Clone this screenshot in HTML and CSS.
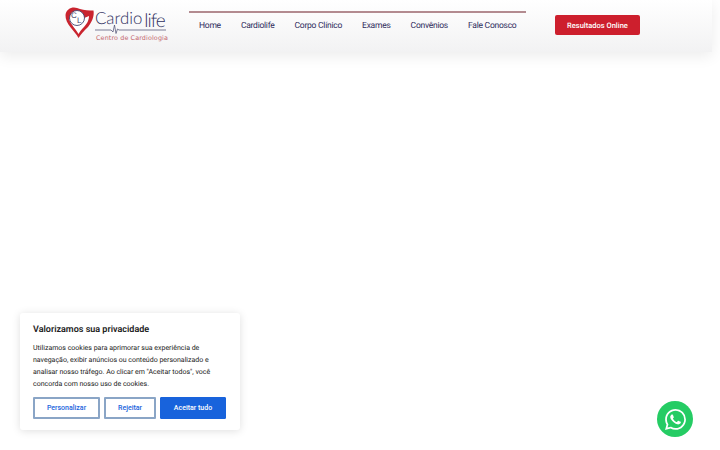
FILE: index.html
```html
<!DOCTYPE html>
<html lang="pt-BR">
<head>
  <meta charset="UTF-8">
  <meta name="viewport" content="width=device-width, initial-scale=1.0">
  <title>Cardiolife - Centro de Cardiologia</title>
  <link rel="stylesheet" href="styles.css">
</head>
<body>
  <header class="topo">
    <a class="logo" href="#">
      <svg class="logo-coracao" width="30" height="32" viewBox="0 0 30 32">
        <path d="M13.5 31 C10 24 0 17 0.5 8 C1 3 5 0.5 9 0.5 C11 0.5 13 1 15 2 C19 3.5 24 3.5 28.5 3.5 C29.5 9 27 15 23 20 C19 24 16 27 13.5 31 Z" fill="#c9242f"/>
        <path d="M13.5 27 C11 22 6 18 4 12 L12 14 L24 9 C24 14 21 18 18.5 20.5 C16.5 22.5 15 24.5 13.5 27 Z" fill="#fff"/>
        <circle cx="12" cy="11" r="7.5" fill="#fff" stroke="#46476f" stroke-width="0.9"/>
        <text class="logo-cl" x="6" y="11">C</text>
        <text class="logo-cl" x="12" y="16">L</text>
      </svg>
      <div class="logo-textos">
        <div class="logo-nome">Cardio<span class="logo-life">life</span></div>
        <svg class="logo-pulso" width="72" height="10" viewBox="0 0 72 10">
          <path d="M0 6 H16 L18 8 L19.5 1 L21 9.5 L22.5 5 L24 6 H71" fill="none" stroke="#46476f" stroke-width="0.7"/>
        </svg>
        <div class="logo-sub">Centro de Cardiologia</div>
      </div>
    </a>

    <nav class="menu">
      <a href="#">Home</a>
      <a href="#">Cardiolife</a>
      <a href="#">Corpo Clínico</a>
      <a href="#">Exames</a>
      <a href="#">Convênios</a>
      <a href="#">Fale Conosco</a>
    </nav>

    <a class="btn-resultados" href="#">Resultados Online</a>
  </header>

  <div class="cookies">
    <h2>Valorizamos sua privacidade</h2>
    <p>Utilizamos cookies para aprimorar sua experiência de navegação, exibir anúncios ou conteúdo personalizado e analisar nosso tráfego. Ao clicar em "Aceitar todos", você concorda com nosso uso de cookies.</p>
    <div class="cookies-botoes">
      <button class="btn-borda btn-personalizar">Personalizar</button>
      <button class="btn-borda btn-rejeitar">Rejeitar</button>
      <button class="btn-aceitar">Aceitar tudo</button>
    </div>
  </div>

  <a class="whatsapp" href="#" title="WhatsApp">
    <svg width="21" height="21" viewBox="0 0 24 24">
      <path fill="#fff" d="M17.47 14.38c-.3-.15-1.76-.87-2.03-.97-.27-.1-.47-.15-.67.15-.2.3-.77.97-.94 1.17-.17.2-.35.22-.65.07-.3-.15-1.25-.46-2.39-1.47-.88-.79-1.48-1.76-1.65-2.06-.17-.3-.02-.46.13-.61.13-.13.3-.35.45-.52.15-.17.2-.3.3-.5.1-.2.05-.37-.02-.52-.08-.15-.67-1.61-.92-2.21-.24-.58-.49-.5-.67-.51h-.57c-.2 0-.52.07-.79.37-.27.3-1.04 1.02-1.04 2.48s1.07 2.88 1.21 3.07c.15.2 2.1 3.2 5.08 4.49.71.3 1.26.49 1.69.62.71.23 1.36.2 1.87.12.57-.09 1.76-.72 2.01-1.41.25-.7.25-1.29.17-1.41-.07-.13-.27-.2-.57-.35zM12.05 21.8h0a9.87 9.87 0 0 1-5.03-1.38l-.36-.21-3.74.98 1-3.65-.24-.37a9.86 9.86 0 0 1-1.51-5.26c0-5.45 4.44-9.88 9.89-9.88 2.64 0 5.12 1.03 6.99 2.9a9.83 9.83 0 0 1 2.89 6.99c0 5.45-4.44 9.88-9.89 9.88zm8.41-18.3A11.82 11.82 0 0 0 12.05 0C5.5 0 .16 5.34.16 11.89c0 2.1.55 4.14 1.59 5.95L.06 24l6.3-1.65a11.88 11.88 0 0 0 5.68 1.45h.01c6.55 0 11.89-5.34 11.89-11.89a11.82 11.82 0 0 0-3.48-8.41z"/>
    </svg>
  </a>
</body>
</html>
```

FILE: styles.css
```css
* {
  margin: 0;
  padding: 0;
  box-sizing: border-box;
}

body {
  font-family: 'Roboto', sans-serif;
  text-rendering: geometricPrecision;
  background: #fff;
  height: 450px;
  overflow: hidden;
  position: relative;
}

a {
  text-decoration: none;
}

.topo {
  height: 52px;
  width: 712px;
  padding-left: 65px;
  background: linear-gradient(to bottom, #fff 0%, #f2f2f3 100%);
  box-shadow: 0 4px 14px rgba(0, 0, 0, 0.08);
  display: flex;
  align-items: flex-start;
}

.logo {
  width: 124px;
  height: 44px;
  padding-top: 7px;
  display: flex;
  flex-shrink: 0;
}

.logo-coracao {
  flex-shrink: 0;
}

.logo-cl {
  font-family: 'Liberation Sans', sans-serif;
  font-size: 8px;
  fill: #46476f;
}

.logo-textos {
  position: relative;
}

.logo-nome {
  font-family: 'Lato', sans-serif;
  font-weight: 300;
  font-size: 16.8px;
  color: #2f3060;
  height: 18px;
  line-height: 18px;
  margin-top: 2px;
  white-space: nowrap;
}

.logo-life {
  font-size: 19px;
  letter-spacing: -1px;
  margin-left: 2px;
  position: relative;
  top: 3px;
}

.logo-pulso {
  position: absolute;
  top: 17px;
  left: 0;
}

.logo-sub {
  font-family: 'DejaVu Sans', sans-serif;
  font-size: 6.4px;
  letter-spacing: 0.12px;
  color: #c4666e;
  margin: 7px 0 0 1px;
  white-space: nowrap;
}

.menu {
  width: 337px;
  height: 33px;
  margin-top: 11px;
  border-top: 2px solid #b38b90;
  display: flex;
  gap: 20px;
  padding: 8px 0 0 10px;
  flex-shrink: 0;
}

.menu a {
  font-size: 8.5px;
  letter-spacing: -0.25px;
  line-height: 11px;
  color: #2f2c5c;
  white-space: nowrap;
}

.btn-resultados {
  margin: 15px 0 0 29px;
  width: 85px;
  height: 20px;
  background: #cd1f2d;
  border-radius: 2px;
  color: #fff;
  font-size: 7.5px;
  font-weight: 500;
  display: flex;
  align-items: center;
  justify-content: center;
}

.cookies {
  position: absolute;
  left: 20px;
  top: 313px;
  width: 220px;
  height: 117px;
  background: #fff;
  border-radius: 3px;
  box-shadow: 0 1px 8px rgba(0, 0, 0, 0.13);
  padding: 11px 13px 10px;
}

.cookies h2 {
  font-size: 9px;
  font-weight: 600;
  color: #212121;
  line-height: 13px;
}

.cookies p {
  font-size: 7px;
  line-height: 12px;
  color: #212121;
  margin-top: 5px;
}

.cookies-botoes {
  display: flex;
  gap: 4px;
  margin-top: 7px;
}

.cookies-botoes button {
  font-family: 'Roboto', sans-serif;
  font-size: 7px;
  font-weight: 500;
  height: 22px;
  border-radius: 1px;
}

.btn-borda {
  background: #fff;
  border: 2px solid #8aa5c6;
  color: #1863dc;
}

.btn-personalizar {
  width: 67px;
}

.btn-rejeitar {
  width: 52px;
}

.btn-aceitar {
  width: 66px;
  background: #1863dc;
  border: 1px solid #1863dc;
  color: #fff;
}

.whatsapp {
  position: absolute;
  left: 657px;
  top: 401px;
  width: 36px;
  height: 36px;
  border-radius: 50%;
  background: #25cc64;
  display: flex;
  align-items: center;
  justify-content: center;
}
```
